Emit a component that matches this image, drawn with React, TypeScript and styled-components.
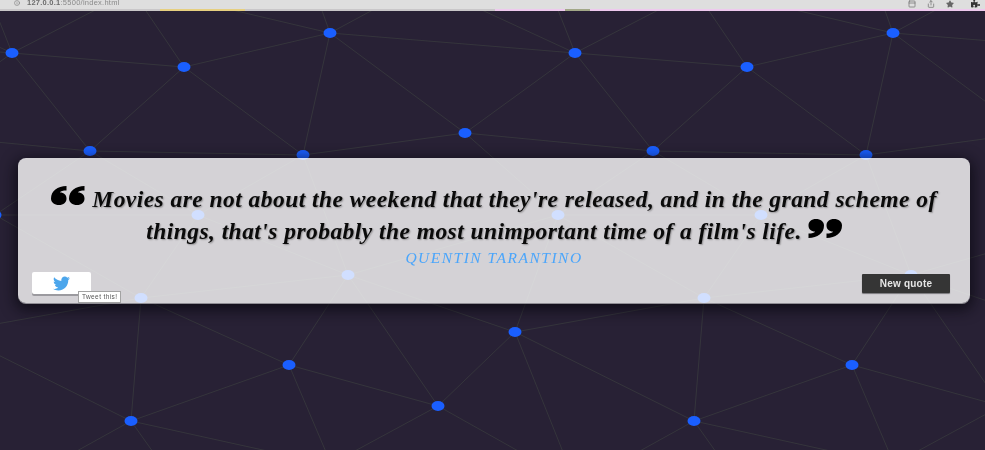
import React from "react";
import styled, { createGlobalStyle } from "styled-components";
import { FaTwitter, FaStar, FaPuzzlePiece } from "react-icons/fa";
import { Info, Share, PanelTop } from "lucide-react";

const TILE = 563;

const GlobalStyle = createGlobalStyle`
  html, body {
    margin: 0;
    padding: 0;
    background: #282135;
  }
`;

const Page = styled.div`
  position: relative;
  width: 985px;
  height: 450px;
  overflow: hidden;
  background: #282135;
  filter: blur(0.45px);
  font-family: "Liberation Sans", Arial, sans-serif;
`;

const Backdrop = styled.svg`
  position: absolute;
  inset: 0;
`;

const BrowserBar = styled.div`
  position: relative;
  height: 10.5px;
  display: flex;
  align-items: flex-start;
  overflow: hidden;
  padding: 0 5px 0 14px;
  background: #dedede;
`;

const TabPeek = styled.div`
  position: absolute;
  left: 0;
  right: 0;
  bottom: 0;
  height: 1.5px;
  background: linear-gradient(
    90deg,
    #c9c7c9 0 160px,
    #e6cf80 160px 245px,
    #c9c7c9 245px 495px,
    #eec9ee 495px 565px,
    #a3a888 565px 590px,
    #eec9ee 590px 985px
  );
`;

const Address = styled.span`
  display: flex;
  align-items: center;
  gap: 7px;
  font-size: 7.5px;
  line-height: 6px;
  font-weight: bold;
  color: #6c6c6c;
  letter-spacing: 0.25px;
`;

const Dim = styled.span`
  font-weight: normal;
  color: #8a8a8a;
`;

const BarIcons = styled.div`
  display: flex;
  align-items: center;
  gap: 11px;
  margin-left: auto;
  margin-top: -1px;
  color: #666;
`;

const ExtensionSlot = styled.span`
  display: flex;
  margin-left: 6px;
  color: #333;
`;

const Main = styled.main`
  position: relative;
  padding: 147.5px 15px 0 18px;
`;

const Card = styled.section`
  display: flex;
  flex-direction: column;
  height: 145px;
  box-sizing: border-box;
  padding-top: 25px;
  border-radius: 8px;
  background: rgba(255, 255, 255, 0.8);
  box-shadow: 0 1px 0 #8f8d94, 0 4px 14px 3px rgba(10, 8, 16, 0.75);
`;

const Quote = styled.p`
  margin: 0;
  padding: 0 14px;
  text-align: center;
  font-family: "Liberation Serif", "Times New Roman", serif;
  font-style: italic;
  font-weight: bold;
  font-size: 23.5px;
  line-height: 32px;
  letter-spacing: 0.45px;
  color: #0a0a0a;
  text-shadow: 1px 1px 1.5px rgba(0, 0, 0, 0.3);
`;

const Mark = styled.svg<{ $closing?: boolean }>`
  display: inline-block;
  width: 34px;
  height: 19px;
  margin: ${(p) => (p.$closing ? "0 0 0 6px" : "0 7px 0 0")};
  vertical-align: ${(p) => (p.$closing ? "1px" : "2px")};
`;

const Author = styled.p`
  margin: 1px 0 0;
  text-align: center;
  font-family: "Liberation Serif", "Times New Roman", serif;
  font-style: italic;
  font-size: 15.5px;
  line-height: 20px;
  letter-spacing: 1.5px;
  color: #4aa5fb;
`;

const Actions = styled.div`
  display: flex;
  align-items: center;
  justify-content: space-between;
  margin-top: 4px;
  padding: 0 20px 0 14px;
`;

const TweetWrap = styled.div`
  position: relative;
`;

const TweetButton = styled.a`
  display: flex;
  align-items: center;
  justify-content: center;
  width: 59px;
  height: 22px;
  border-radius: 2px;
  background: #fff;
  box-shadow: 0 2px 0 #9b9a9f;
  color: #4ca6ec;
`;

const Tooltip = styled.span`
  position: absolute;
  left: 46px;
  top: 19px;
  padding: 0 3px;
  height: 10px;
  line-height: 10px;
  white-space: nowrap;
  border: 1px solid #a3a3a3;
  background: #fff;
  font-size: 6.5px;
  letter-spacing: 0.4px;
  color: #555;
`;

const NewQuote = styled.button`
  width: 88px;
  height: 19px;
  padding: 0;
  border: 0;
  border-radius: 1px;
  background: #353535;
  box-shadow: 0 1px 1px #77767b;
  font-family: inherit;
  font-size: 10px;
  font-weight: bold;
  letter-spacing: 0.2px;
  color: #e6e6e6;
`;

const nodes: Record<string, [number, number]> = {
  A: [12, 53],
  B: [184, 67],
  C: [330, 33],
  D: [90, 151],
  E: [303, 155],
  F: [465, 133],
  N: [558, 215],
  M: [198, 215],
  P: [348, 275],
  Q: [141, 298],
  R: [515, 332],
  S: [289, 365],
  T: [438, 406],
  U: [131, 421],
};

// "+" means the same node in the next tile to the right
const edges =
  "A-B B-C A-D B-D B-E C-E C-F E-F D-E C-A+ F-A+ F-D+ F-N N-D+ N-M+ N-Q+ M-D M-E M-P M-Q Q-P Q-U Q-S P-N P-R P-S P-T P-E R-N R-T R-Q+ R-U+ S-T S-U".split(
    " "
  );

// lines that run off the top or bottom of the page
const stubs: [string, number, number][] = [
  ["A", 105, 5],
  ["A", -7, 5],
  ["A", -92, 5],
  ["B", 142, 5],
  ["C", 211, 5],
  ["C", 320, 5],
  ["C", 382, 5],
  ["S", 326, 452],
  ["T", 353, 452],
  ["T", 520, 452],
  ["U", 75, 452],
  ["U", 153, 452],
  ["U", 272, 452],
  ["R", 563, 452],
];

const point = (key: string): [number, number] => {
  const [x, y] = nodes[key.replace("+", "")];
  return [key.endsWith("+") ? x + TILE : x, y];
};

const NodeField = () => (
  <Backdrop width="985" height="450" viewBox="0 0 985 450">
    {[-TILE, 0, TILE].map((dx) => (
      <g key={dx} transform={`translate(${dx} 0)`}>
        <g stroke="#35353c" strokeWidth="1" fill="none">
          {edges.map((edge) => {
            const [from, to] = edge.split("-");
            const [x1, y1] = point(from);
            const [x2, y2] = point(to);
            return <line key={edge} x1={x1} y1={y1} x2={x2} y2={y2} />;
          })}
          {stubs.map(([from, x2, y2]) => {
            const [x1, y1] = point(from);
            return <line key={from + x2} x1={x1} y1={y1} x2={x2} y2={y2} />;
          })}
        </g>
        {Object.entries(nodes).map(([key, [cx, cy]]) => (
          <ellipse key={key} cx={cx} cy={cy} rx="6.5" ry="5" fill="#1a5fff" />
        ))}
      </g>
    ))}
  </Backdrop>
);

const QUOTE_BLOB =
  "M15.5 0C6.500 0.500 0 4.500 0 12.500C0 16.500 3.500 19 8 19C12.500 19 15.500 16.500 15.500 12.500C15.500 9 13 6.500 9 6.500C9.500 5 12 4.500 15.500 4.500Z";

const QuoteMark = ({ closing }: { closing?: boolean }) => (
  <Mark $closing={closing} viewBox="0 0 34 19">
    <g transform={closing ? "rotate(180 17 9.5)" : undefined} fill="#000">
      <path d={QUOTE_BLOB} />
      <path d={QUOTE_BLOB} transform="translate(18 0)" />
    </g>
  </Mark>
);

export default function App() {
  return (
    <Page>
      <GlobalStyle />
      <NodeField />
      <BrowserBar>
        <Address>
          <Info size={6} />
          <span>
            127.0.0.1<Dim>:5500/index.html</Dim>
          </span>
        </Address>
        <BarIcons>
          <PanelTop size={8} />
          <Share size={8} />
          <FaStar size={8} />
          <ExtensionSlot>
            <FaPuzzlePiece size={9} />
          </ExtensionSlot>
        </BarIcons>
        <TabPeek />
      </BrowserBar>
      <Main>
        <Card>
          <Quote>
            <QuoteMark />
            Movies are not about the weekend that they're released, and in the
            grand scheme of things, that's probably the most unimportant time of
            a film's life.
            <QuoteMark closing />
          </Quote>
          <Author>QUENTIN TARANTINO</Author>
          <Actions>
            <TweetWrap>
              <TweetButton>
                <FaTwitter size={17} />
              </TweetButton>
              <Tooltip>Tweet this!</Tooltip>
            </TweetWrap>
            <NewQuote>New quote</NewQuote>
          </Actions>
        </Card>
      </Main>
    </Page>
  );
}
